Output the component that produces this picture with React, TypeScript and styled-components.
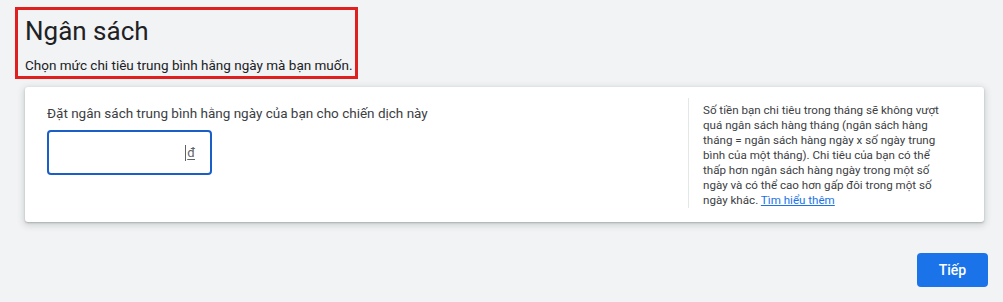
import styled, { createGlobalStyle } from "styled-components";

const Global = createGlobalStyle`
  html, body {
    margin: 0;
    padding: 0;
    background: #f1f3f4;
    font-family: Roboto, "Noto Sans", Arial, sans-serif;
    color: #202124;
  }
`;

const Page = styled.div`
  width: 1003px;
  height: 302px;
  box-sizing: border-box;
  padding-top: 7px;
  display: flex;
  flex-direction: column;
`;

const Header = styled.div`
  margin-left: 15px;
  width: 343px;
  height: 72px;
  box-sizing: border-box;
  border: 3px solid #e0201e;
  padding: 4px 0 0 7px;
  display: flex;
  flex-direction: column;
`;

const Title = styled.h1`
  margin: 0;
  font-size: 26px;
  font-weight: 400;
  line-height: 34px;
  color: #202124;
`;

const Subtitle = styled.p`
  margin: 8px 0 0;
  font-size: 13.5px;
  line-height: 18px;
  color: #202124;
`;

const Card = styled.div`
  margin: 8px 0 0 25px;
  width: 959px;
  height: 135px;
  box-sizing: border-box;
  background: #ffffff;
  border-radius: 3px;
  box-shadow: 0 1px 2px rgba(60, 64, 67, 0.3), 0 2px 6px 2px rgba(60, 64, 67, 0.15);
  display: flex;
  padding: 11px 33px 14px 22px;
`;

const Main = styled.div`
  flex: 1;
  display: flex;
  flex-direction: column;
  padding-top: 5px;
`;

const Label = styled.div`
  font-size: 13.5px;
  line-height: 20px;
  color: #3c4043;
`;

const Field = styled.div`
  margin-top: 7px;
  width: 165px;
  height: 45px;
  box-sizing: border-box;
  border: 2px solid #1a5fc8;
  border-radius: 4px;
  display: flex;
  align-items: center;
  justify-content: flex-end;
  padding-right: 15px;
`;

const Caret = styled.span`
  width: 1px;
  height: 16px;
  background: #5f6368;
  margin-right: 1px;
`;

const Currency = styled.span`
  font-size: 13px;
  color: #5f6368;
  text-decoration: underline;
  text-underline-offset: 2px;
`;

const Divider = styled.div`
  width: 1px;
  margin: 0 14px 0 0;
  background: #e4e6e8;
  align-self: stretch;
`;

const Help = styled.p`
  margin: 0;
  width: 248px;
  padding-top: 5px;
  font-size: 11.6px;
  line-height: 15px;
  color: #3c4043;
`;

const Link = styled.a`
  color: #1a73e8;
  text-decoration: underline;
`;

const Actions = styled.div`
  display: flex;
  justify-content: flex-end;
  padding-right: 15px;
  margin-top: 31px;
`;

const Button = styled.button`
  width: 71px;
  height: 34px;
  border: none;
  border-radius: 4px;
  background: #1a73e8;
  color: #ffffff;
  font-family: Roboto, Arial, sans-serif;
  font-size: 14px;
  font-weight: 500;
  cursor: pointer;
`;

export default function App() {
  return (
    <Page>
      <Global />
      <Header>
        <Title>Ngân sách</Title>
        <Subtitle>Chọn mức chi tiêu trung bình hằng ngày mà bạn muốn.</Subtitle>
      </Header>
      <Card>
        <Main>
          <Label>Đặt ngân sách trung bình hằng ngày của bạn cho chiến dịch này</Label>
          <Field>
            <Caret />
            <Currency>đ</Currency>
          </Field>
        </Main>
        <Divider />
        <Help>
          Số tiền bạn chi tiêu trong tháng sẽ không vượt quá ngân sách hàng tháng (ngân sách hàng
          tháng = ngân sách hàng ngày x số ngày trung bình của một tháng). Chi tiêu của bạn có thể
          thấp hơn ngân sách hàng ngày trong một số ngày và có thể cao hơn gấp đôi trong một số
          ngày khác. <Link href="#">Tìm hiểu thêm</Link>
        </Help>
      </Card>
      <Actions>
        <Button>Tiếp</Button>
      </Actions>
    </Page>
  );
}
